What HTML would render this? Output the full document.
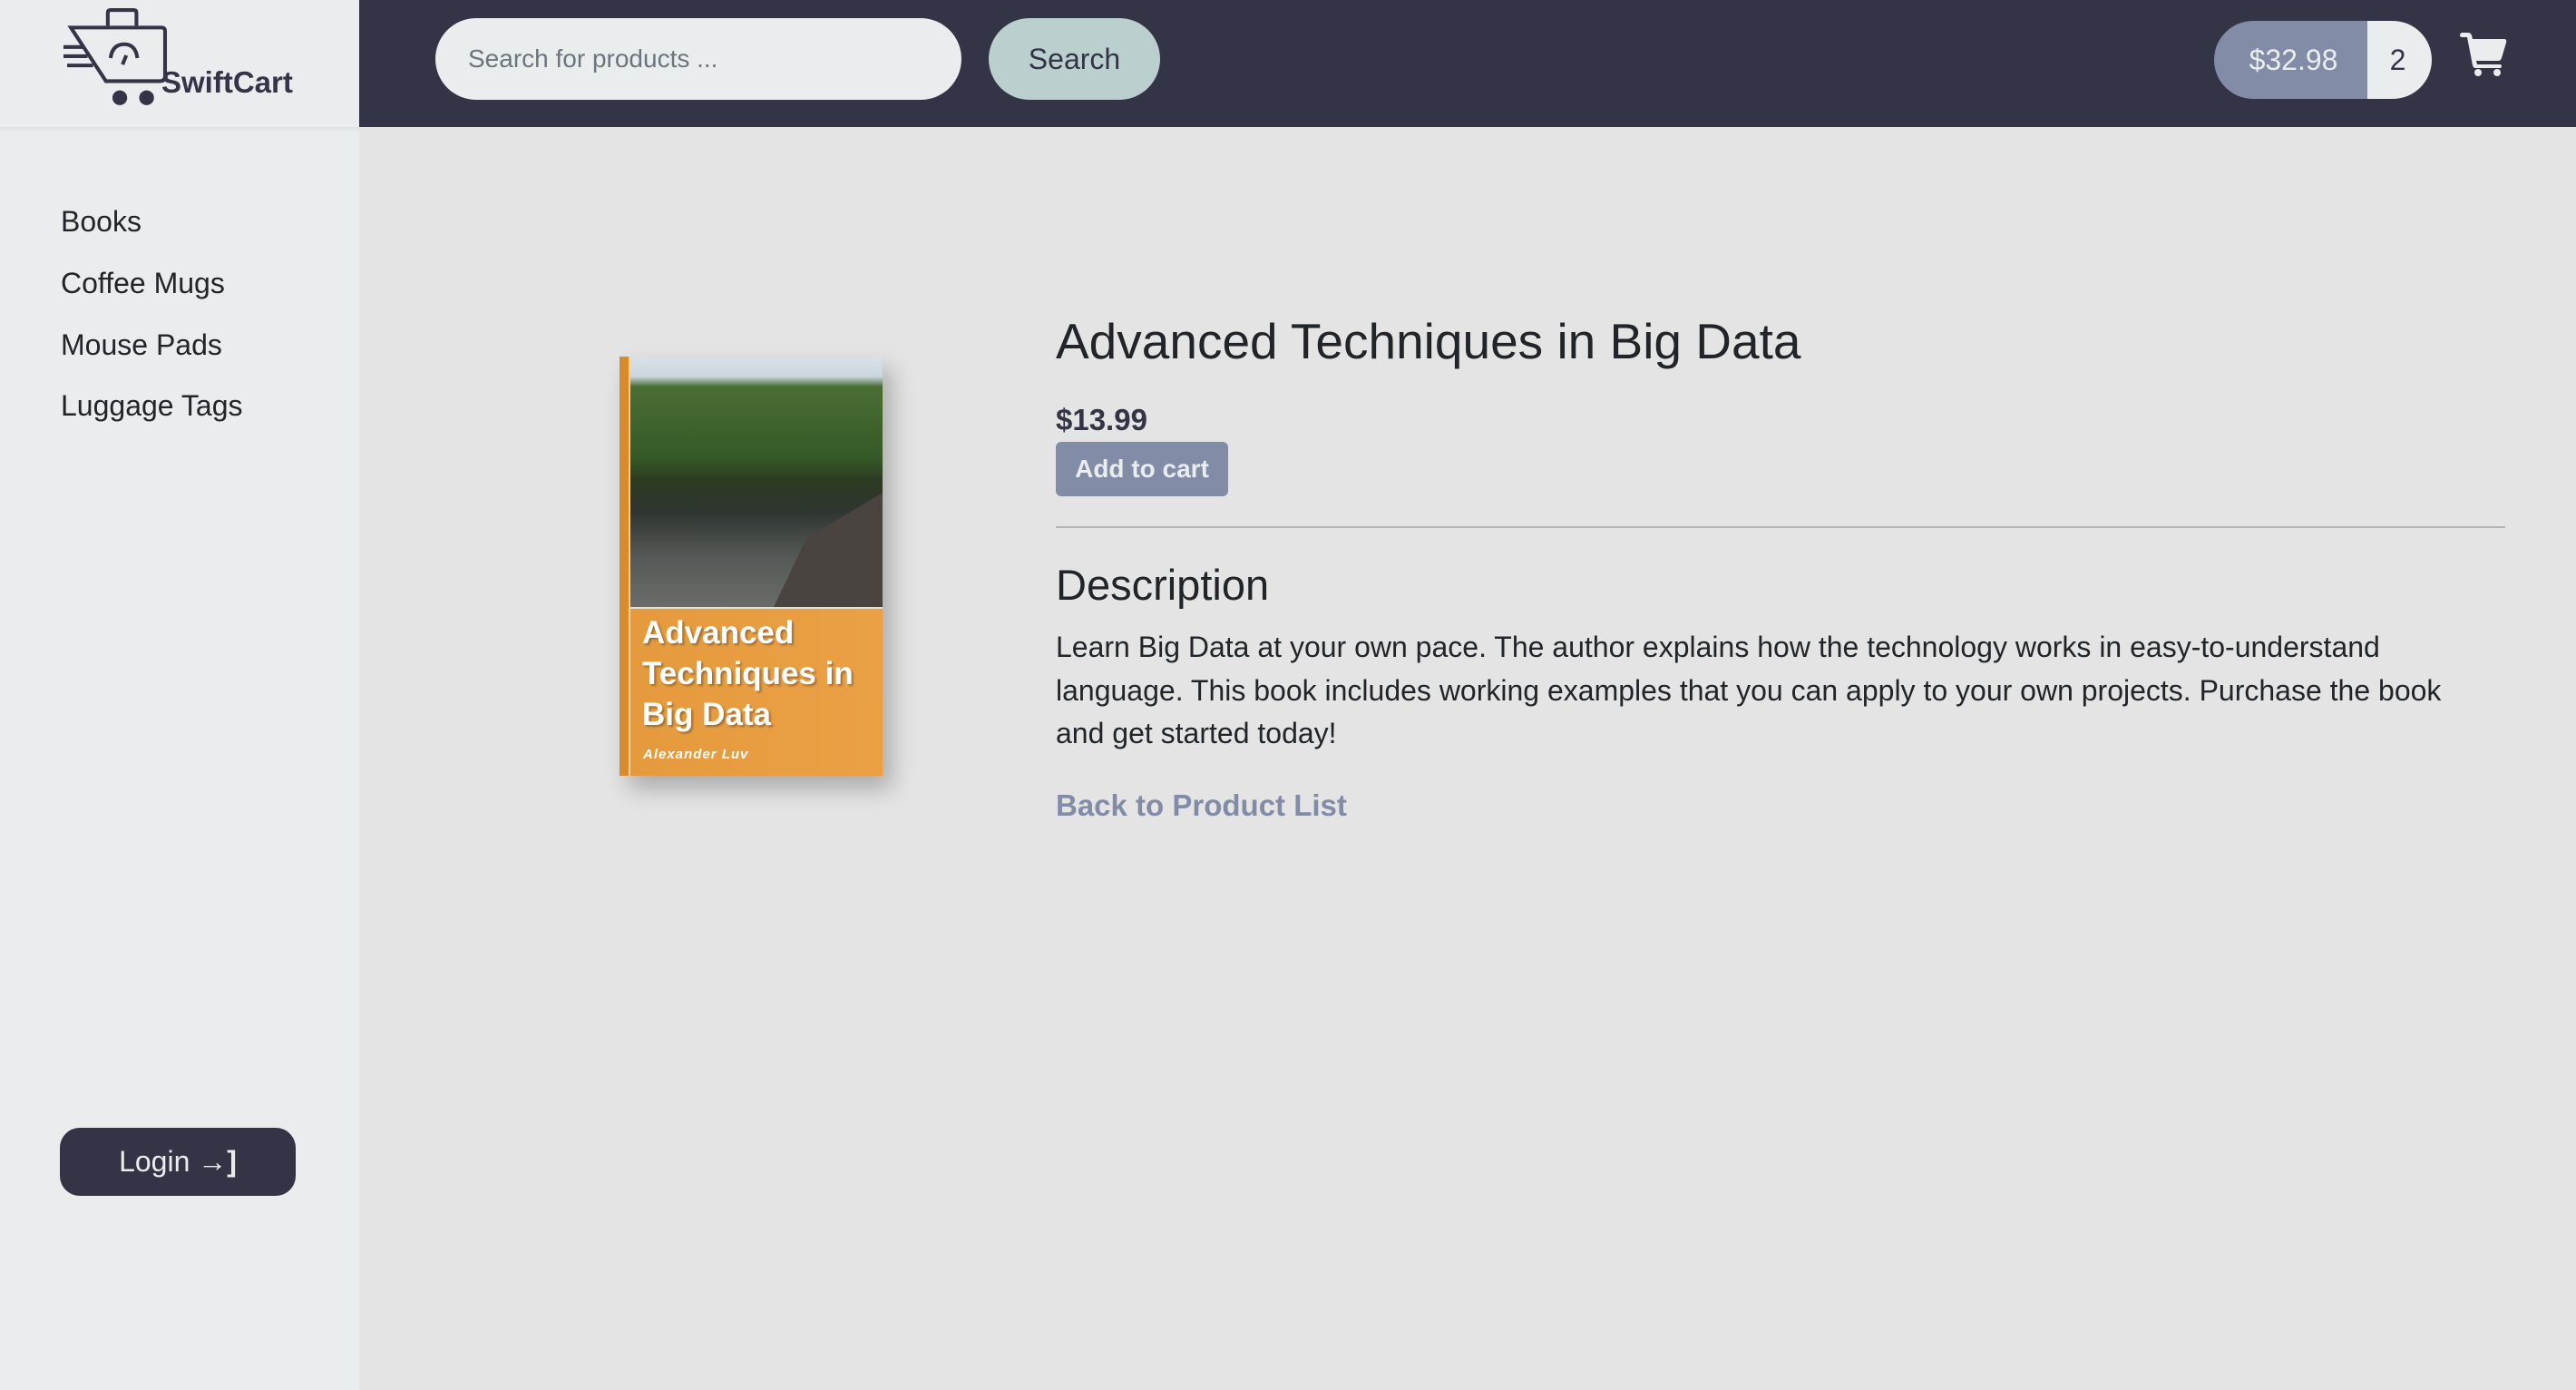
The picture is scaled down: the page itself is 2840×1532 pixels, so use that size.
<!DOCTYPE html>
<html><head><meta charset="utf-8"><style>
*{box-sizing:border-box;margin:0;padding:0}
body{width:2840px;height:1532px;overflow:hidden;background:#e4e4e4;font-family:"Liberation Sans",sans-serif;color:#212529;position:relative}
.side{position:absolute;left:0;top:0;width:396px;height:1532px;background:#e9edee}
.hdr{position:absolute;left:396px;top:0;right:0;height:140px;background:#343447}
.abs{position:absolute}
.nav{position:absolute;left:67px;font-size:32px;color:#212529}
p.d{font-size:32px;line-height:47.5px}
</style></head><body>
<div class="side"></div>
<div class="abs" style="left:0;top:140px;width:396px;height:6px;background:linear-gradient(#dde0e1,#e9edee)"></div>
<div class="hdr"></div>
<!-- logo -->
<svg class="abs" style="left:62px;top:8px" width="130" height="112" viewBox="0 0 120 110" fill="none" stroke="#343447" stroke-width="4">
<path d="M52 20 V6 Q52 3 55 3 H80 Q83 3 83 6 V20"/>
<path d="M12 22 H110 Q114 22 114 26 L114 75 Q114 80 108 80 H50 Z"/>
<path d="M55 55 Q57 40 70 40 Q82 40 84 55"/>
<path d="M72 52 L68 62"/>
<path d="M4 43 H26 M4 53 H30 M8 63 H36"/>
<circle cx="65" cy="98" r="8" fill="#343447" stroke="none"/>
<circle cx="94" cy="98" r="8" fill="#343447" stroke="none"/>
</svg>
<div class="abs" style="left:178px;top:72px;font-size:33px;font-weight:bold;color:#343447">SwiftCart</div>
<!-- search -->
<div class="abs" style="left:480px;top:20px;width:580px;height:90px;border-radius:45px;background:#e9edee;font-size:28px;color:#6c757d;padding-left:36px;line-height:90px">Search for products ...</div>
<div class="abs" style="left:1090px;top:20px;width:189px;height:90px;border-radius:45px;background:#bccfcf;font-size:32px;color:#343447;text-align:center;line-height:90px">Search</div>
<!-- cart pill -->
<div class="abs" style="left:2441px;top:23px;width:169px;height:86px;border-radius:43px 0 0 43px;background:#828ca6;color:#e9edee;font-size:32px;text-align:center;line-height:86px;padding-left:6px">$32.98</div>
<div class="abs" style="left:2610px;top:23px;width:71px;height:86px;border-radius:0 43px 43px 0;background:#e9edee;color:#343447;font-size:32px;text-align:center;line-height:86px;padding-right:4px">2</div>
<svg class="abs" style="left:2712px;top:36px" width="52" height="48" viewBox="0 0 52 48" fill="#e9edee">
<path d="M0 3 Q0 0 3 0 H9 Q12 0 13 3 L14 7 H49 Q52 7 51 11 L46 28 Q45 31 42 31 H18 L19 35 H44 Q46 35 46 37 Q46 39 44 39 H17 Q15 39 14 36 L8 5 H3 Q0 5 0 3Z"/>
<circle cx="20" cy="44" r="4"/><circle cx="41" cy="44" r="4"/>
</svg>
<!-- side nav -->
<div class="nav" style="top:226px">Books</div>
<div class="nav" style="top:294px">Coffee Mugs</div>
<div class="nav" style="top:362px">Mouse Pads</div>
<div class="nav" style="top:429px">Luggage Tags</div>
<div class="abs" style="left:66px;top:1243px;width:260px;height:75px;border-radius:22px;background:#343447;color:#e9edee;font-size:32px;text-align:center;line-height:75px">Login <span style="font-weight:bold">→]</span></div>
<!-- book -->
<div class="abs" style="left:683px;top:393px;width:290px;height:462px;background:linear-gradient(90deg,#e49a3c,#eba045);box-shadow:10px 14px 24px rgba(0,0,0,.25)">
<div class="abs" style="left:0;top:0;width:10px;height:462px;background:#d98a2a"></div>
<div class="abs" style="left:10px;top:0;width:2px;height:462px;background:#f5d3a0"></div>
<div class="abs" style="left:12px;top:0;width:278px;height:276px;background:linear-gradient(180deg,#d8e2e8 0%,#c9d6dc 8%,#4a6e34 12%,#365a28 40%,#2d3a22 50%,#2f3530 62%,#555a58 80%,#6a6c68 100%)"></div>
<div class="abs" style="left:170px;top:150px;width:120px;height:126px;background:#4a4440;clip-path:polygon(100% 0,100% 100%,0 100%,30% 40%)"></div>
<div class="abs" style="left:12px;top:276px;width:278px;height:2px;background:#e8e0d0"></div>
<div class="abs" style="left:25px;top:282px;color:#fff;font-weight:bold;font-size:35px;line-height:45px;text-shadow:2px 2px 2px rgba(0,0,0,.3)">Advanced<br>Techniques in<br>Big Data</div>
<div class="abs" style="left:26px;top:430px;color:#fff;font-style:italic;font-weight:bold;font-size:15px;letter-spacing:1px">Alexander Luv</div>
</div>
<!-- content -->
<div class="abs" style="left:1164px;top:344px;font-size:55px;color:#212529">Advanced Techniques in Big Data</div>
<div class="abs" style="left:1164px;top:444px;font-size:33px;font-weight:bold;color:#343447">$13.99</div>
<div class="abs" style="left:1164px;top:487px;width:190px;height:60px;border-radius:6px;background:#828ca6;color:#e9edee;font-size:28px;font-weight:bold;text-align:center;line-height:60px">Add to cart</div>
<div class="abs" style="left:1164px;top:580px;width:1598px;height:2px;background:#b4b4b4"></div>
<div class="abs" style="left:1164px;top:617px;font-size:47px">Description</div>
<p class="d abs" style="left:1164px;top:690px;width:1575px">Learn Big Data at your own pace. The author explains how the technology works in easy-to-understand language. This book includes working examples that you can apply to your own projects. Purchase the book and get started today!</p>
<div class="abs" style="left:1164px;top:869px;font-size:33px;font-weight:bold;color:#828ca6">Back to Product List</div>
</body></html>
